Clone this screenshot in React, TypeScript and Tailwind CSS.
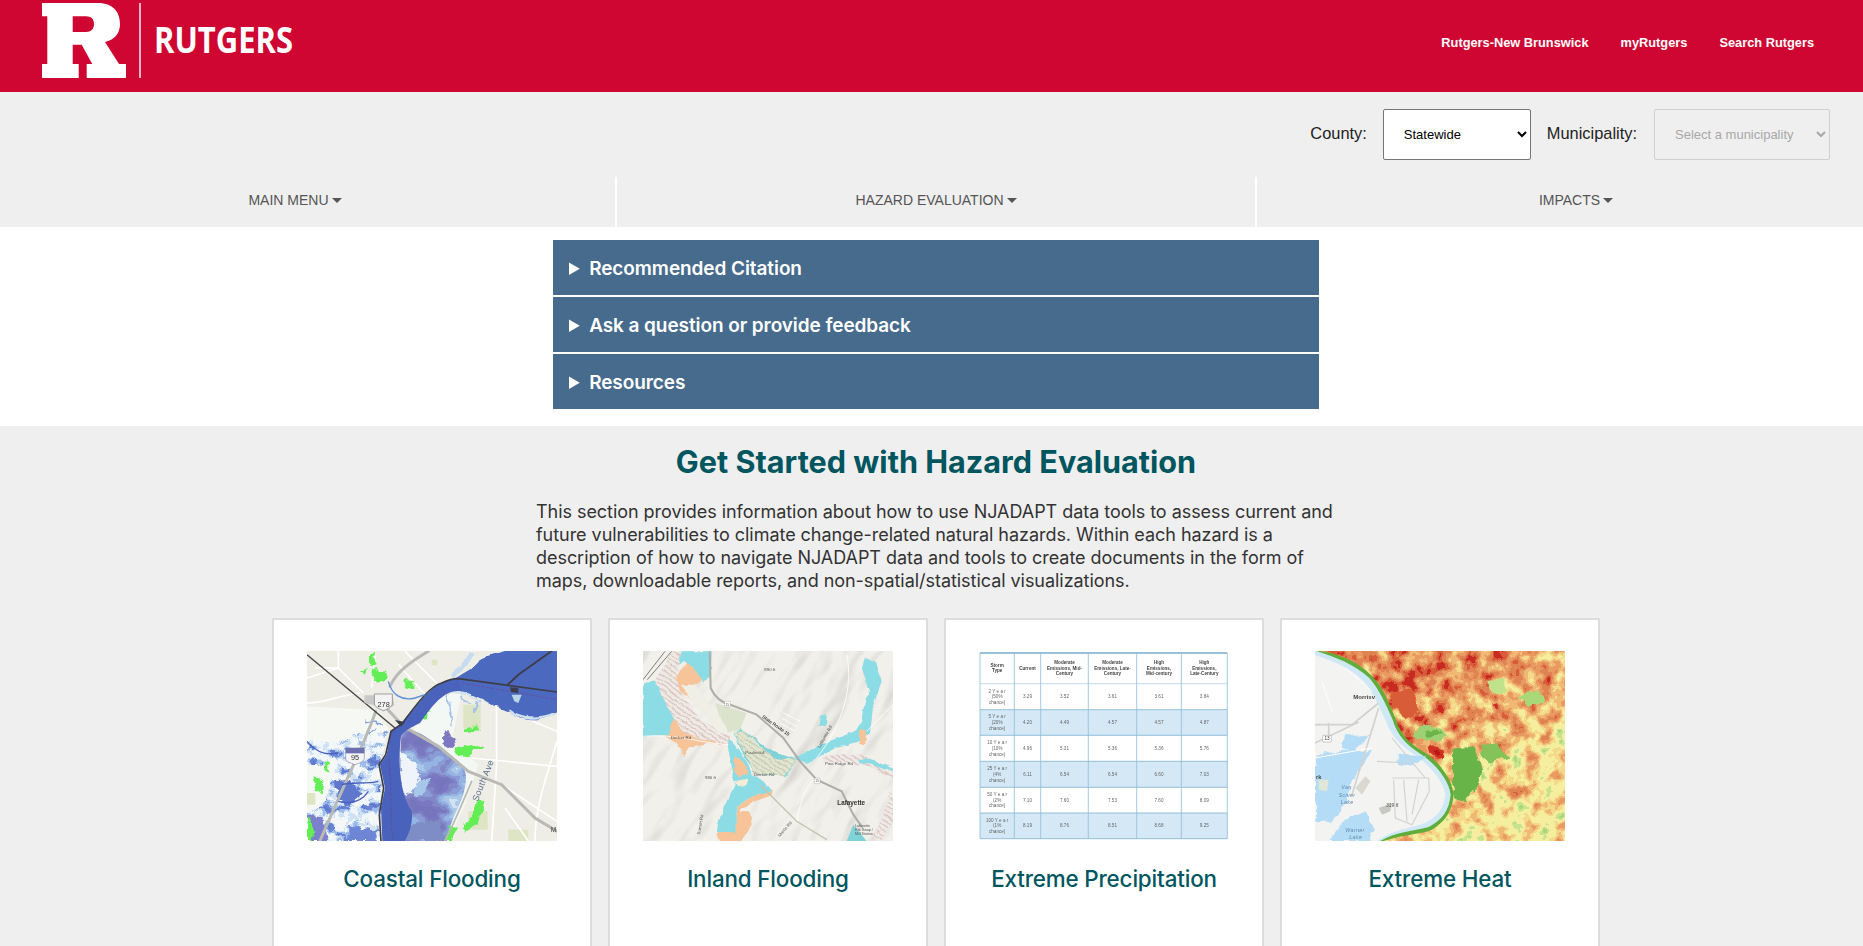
import React from "react";

const hex = (h: string) => [1, 3, 5].map((i) => parseInt(h.slice(i, i + 2), 16) / 255);
const tables = (p: string[]) => {
  const c = p.map(hex);
  return [0, 1, 2].map((k) => c.map((v) => v[k].toFixed(3)).join(" "));
};

function Palette({ colors }: { colors: string[] }) {
  const [r, g, b] = tables(colors);
  return (
    <feComponentTransfer>
      <feFuncR type="discrete" tableValues={r} />
      <feFuncG type="discrete" tableValues={g} />
      <feFuncB type="discrete" tableValues={b} />
      <feFuncA type="linear" slope="0" intercept="1" />
    </feComponentTransfer>
  );
}

const GRAY = "1 0 0 0 0 1 0 0 0 0 1 0 0 0 0 0 0 0 0 1";

function Jag({ id, freq, scale, seed }: { id: string; freq: string; scale: string; seed: string }) {
  return (
    <filter id={id} x="-10%" y="-10%" width="120%" height="120%" colorInterpolationFilters="sRGB">
      <feTurbulence type="fractalNoise" baseFrequency={freq} numOctaves="3" seed={seed} result="n" />
      <feDisplacementMap in="SourceGraphic" in2="n" scale={scale} xChannelSelector="R" yChannelSelector="G" />
    </filter>
  );
}

function Logo() {
  return (
    <div className="flex items-start pl-[42px] pt-[3px]">
      <svg viewBox="0 0 84 75" className="w-[84px] h-[75px] block">
        <path
          fillRule="evenodd"
          fill="#fff"
          d="M0 0H56C71 0 78 9 78 21C78 31 72 37 63 39L77 61H84V75H44.7V61H50.3L39.7 41.7H30.7V61H36.7V75H0V61H5.3V13.3H0ZM30.7 13.3V29H44C49 29 52 26 52 21C52 16 49 13.3 44 13.3Z"
        />
      </svg>
      <div className="w-[2px] h-[75px] bg-[#f3b6c4] ml-[13px]" />
      <svg viewBox="0 0 180 56" className="w-[180px] h-[56px] block ml-[13px] mt-[12px]">
        <text x="0" y="38" fill="#fff" fontFamily="'Open Sans', sans-serif" fontWeight="700" fontSize="36" textLength="139" lengthAdjust="spacingAndGlyphs">
          RUTGERS
        </text>
      </svg>
    </div>
  );
}

function Coastal() {
  return (
    <svg viewBox="6 9 750 570" className="w-[250px] h-[190px] block">
      <defs>
        <filter id="cb" x="-2%" y="-2%" width="104%" height="104%">
          <feGaussianBlur stdDeviation="1.6" />
        </filter>
        <Jag id="cj" freq="0.05" scale="22" seed="3" />
        <Jag id="cj2" freq="0.025" scale="16" seed="8" />
        <filter id="cf" x="0" y="0" width="1" height="1" colorInterpolationFilters="sRGB">
          <feTurbulence type="fractalNoise" baseFrequency="0.012 0.016" numOctaves="3" seed="7" />
          <feColorMatrix values={GRAY} />
          <Palette colors={["#7478c0", "#7478c0", "#7478c0", "#7474bc", "#7a78c0", "#8288c8", "#8a9cd6", "#96b4e2", "#aac8ea", "#d2e2f2", "#edf3f8", "#edf3f8"]} />
        </filter>
        <filter id="cl" x="0" y="0" width="1" height="1" colorInterpolationFilters="sRGB">
          <feTurbulence type="fractalNoise" baseFrequency="0.022 0.03" numOctaves="4" seed="21" />
          <feColorMatrix values={GRAY} />
          <Palette colors={["#5f78cc", "#5f78cc", "#5f78cc", "#6a86d4", "#9cbcea", "#d0e2f4", "#f0f6fa", "#f6f9f7", "#f6f9f7", "#f6f9f7", "#f6f9f7", "#f6f9f7"]} />
        </filter>
        <clipPath id="cr">
          <path d="M290 250C330 235 370 270 420 310C470 345 495 365 478 425C470 470 440 500 425 579H300C295 530 320 500 300 470C280 430 285 320 290 250Z" />
        </clipPath>
        <clipPath id="cll">
          <path d="M6 260C60 300 120 290 170 240C205 215 235 225 250 240C235 290 230 340 222 360C235 420 228 500 222 579H6V480C70 500 90 400 60 360L6 340Z" />
        </clipPath>
      </defs>
      <g filter="url(#cb)">
        <rect x="6" y="9" width="750" height="570" fill="#eeede6" />
        <path d="M6 175L205 185L250 240L225 360L225 579H6Z" fill="#f6f8f4" />
        <path d="M330 215C370 170 420 130 470 135L440 280L520 350L480 470L430 579H300Z" fill="#f4f8f5" />
        <g fill="#dde5c4">
          <rect x="475" y="170" width="52" height="72" />
          <rect x="490" y="490" width="58" height="55" />
          <rect x="610" y="545" width="60" height="34" />
          <rect x="6" y="435" width="25" height="35" />
          <rect x="380" y="35" width="17" height="17" />
        </g>
        <g fill="none" stroke="#fff" strokeWidth="5">
          <path d="M6 165C60 165 90 145 165 135M30 60L100 60L175 135M100 10L100 60M6 90L100 60" />
          <path d="M210 25L200 120M300 10L420 130M280 50L370 150" />
          <path d="M575 170L575 350L560 579M500 330L756 355M660 210L756 250M756 280C720 400 690 480 690 579M575 400L756 520M600 480L670 579" />
        </g>
        <g filter="url(#cj2)">
          <path d="M452 90C480 72 510 60 525 35C545 20 590 12 625 2H770V185C725 205 700 222 655 210C630 206 612 185 570 176C545 160 510 140 470 130C440 122 420 128 395 148C420 120 440 100 452 90Z" fill="#4c69bf" />
          <path d="M500 12L470 60L440 88" fill="none" stroke="#c7dcf0" strokeWidth="12" />
          <path d="M400 140C440 122 490 135 525 160M610 184C640 210 700 222 770 188" fill="none" stroke="#cfe2f2" strokeWidth="7" />
        </g>
        <g filter="url(#cj)" fill="none" strokeWidth="7" stroke="#a7c3ea">
          <path d="M430 140L440 235M520 160L510 190M470 150L490 170" />
          <path d="M180 220L230 225M170 290L250 250M120 300L215 240" stroke="#7fa3dc" strokeWidth="5" />
        </g>
        <path d="M620 140L650 140L640 165L628 160Z" fill="#b8d6e4" />
        <g filter="url(#cj)">
          <rect x="6" y="260" width="260" height="319" filter="url(#cl)" clipPath="url(#cll)" />
        </g>
        <rect x="285" y="235" width="215" height="344" filter="url(#cf)" clipPath="url(#cr)" />
        <g filter="url(#cj)">
          <path d="M285 300C310 330 340 350 345 390C330 420 320 440 300 445C285 400 282 350 285 300Z" fill="#eef4f9" />
          <path d="M340 395L380 390L350 450L325 440Z" fill="#a8c8ea" />
          <path d="M420 250L455 275L440 300L415 290Z" fill="#7d78c0" />
          <path d="M6 500L50 505L70 579H6Z" fill="#7c80cc" />
          <path d="M130 530L215 550L215 579H130Z" fill="#6d86d6" />
          <path d="M300 530L400 515L425 579H300Z" fill="#7f8dc6" />
          <path d="M90 400L130 395L170 440L130 475L100 450Z" fill="#5e78cc" />
        </g>
        <g fill="#64ee55" filter="url(#cj)">
          <path d="M205 62L240 68L245 95L215 105L200 85Z" />
          <path d="M195 20L210 12L208 50L195 50Z" />
          <path d="M295 95L325 100L325 125L300 120Z" />
          <path d="M445 300L495 288L540 298L505 312L480 330L455 320Z" />
          <path d="M470 245L515 238L510 222L525 250L480 255Z" />
          <path d="M520 450L538 460L525 515L480 555L470 540L505 500Z" />
          <path d="M432 530L460 540L440 579H418Z" />
          <path d="M22 385L55 400L50 440L32 425Z" />
          <path d="M6 510L28 530L20 579L6 579Z" />
          <path d="M350 210L375 182L362 215Z" />
          <path d="M60 345L75 340L70 375L55 365Z" />
          <path d="M165 70L190 60L180 80Z" />
        </g>
        <g fill="none" stroke="#b9b9b6" strokeWidth="9" strokeLinecap="round">
          <path d="M370 10C320 40 275 70 255 115" />
          <path d="M212 190C190 260 130 380 45 579" />
          <path d="M230 165L295 235L400 295L490 370L590 410L690 510L756 550" />
          <path d="M500 400C470 470 450 520 420 579" strokeWidth="5" />
        </g>
        <path d="M232 579L228 480L240 420L225 350L245 320L258 252L290 226C325 190 370 120 410 105C425 98 440 92 460 92L470 130C425 122 390 160 345 225C315 240 295 250 288 265C280 330 280 430 320 490C325 530 310 560 300 579Z" fill="#4a62bb" />
        <path d="M470 105L756 155M252 330C262 400 252 480 264 579" fill="none" stroke="#6f3f99" strokeWidth="2" strokeDasharray="10 5" />
        <path d="M6 20L270 240" stroke="#444" strokeWidth="4" />
        <path d="M228 579L223 500L236 420L222 350L242 320L258 250L290 228C320 190 370 115 410 105C425 98 440 92 460 92L756 132" fill="none" stroke="#3e3e4a" strokeWidth="5" />
        <path d="M740 9L640 80L608 110" fill="none" stroke="#3e3e4a" strokeWidth="6" />
        <path d="M615 118L640 120L640 135L618 132Z" fill="#3e3e4a" />
        <path d="M270 216L300 222L288 236Z" fill="#3e3e4a" />
        <g fill="none" stroke="#4a5fc0" strokeWidth="4">
          <path d="M6 280C40 320 70 320 100 315M110 410C140 400 180 410 220 400M100 460C140 470 170 460 190 430" />
          <path d="M250 100C260 140 290 160 330 150L360 140" stroke="#5b8fd8" />
        </g>
        <path d="M178 142H262L268 172L236 190L208 172L178 165Z" fill="#c9c9c9" />
        <path d="M208 138H262V165C262 178 248 182 236 188C222 182 208 178 208 165Z" fill="#f4f4f4" stroke="#777" strokeWidth="2" />
        <text x="236" y="178" fontSize="22" fill="#333" textAnchor="middle" fontFamily="'Liberation Sans', sans-serif">278</text>
        <path d="M122 300H178V330C178 340 165 345 150 350C135 345 122 340 122 330Z" fill="#f4f4f4" stroke="#8a8ab0" strokeWidth="2" />
        <path d="M122 300H178V316H122Z" fill="#6a70b0" />
        <text x="150" y="336" fontSize="22" fill="#333" textAnchor="middle" fontFamily="'Liberation Sans', sans-serif">95</text>
        <text x="0" y="0" fontSize="27" fill="#5b6f90" fontFamily="'Liberation Sans', sans-serif" transform="translate(518 462) rotate(-68)" letterSpacing="1">South Ave</text>
        <text x="737" y="552" fontSize="20" fill="#444" fontFamily="'Liberation Sans', sans-serif">M</text>
      </g>
    </svg>
  );
}

function Inland() {
  const cyan = "#8cdce6";
  const peach = "#f6c498";
  return (
    <svg viewBox="9 9 750 570" className="w-[250px] h-[190px] block">
      <defs>
        <filter id="ib" x="-2%" y="-2%" width="104%" height="104%">
          <feGaussianBlur stdDeviation="2.2" />
        </filter>
        <Jag id="ij" freq="0.03" scale="14" seed="5" />
        <filter id="ih" x="0" y="0" width="1" height="1" colorInterpolationFilters="sRGB">
          <feTurbulence type="fractalNoise" baseFrequency="0.009 0.003" numOctaves="3" seed="12" result="n" />
          <feDiffuseLighting in="n" surfaceScale="22" diffuseConstant="1.18" lightingColor="#fff">
            <feDistantLight azimuth="315" elevation="58" />
          </feDiffuseLighting>
        </filter>
        <pattern id="ihatch" width="13" height="13" patternUnits="userSpaceOnUse" patternTransform="rotate(35)">
          <rect width="13" height="13" fill="#eeeae4" />
          <rect width="13" height="3.5" fill="#dabfbf" />
        </pattern>
        <pattern id="ihg" width="13" height="13" patternUnits="userSpaceOnUse" patternTransform="rotate(35)">
          <rect width="13" height="13" fill="#dfe5cf" />
          <rect width="13" height="3" fill="#c8c4ae" />
        </pattern>
      </defs>
      <g filter="url(#ib)">
        <rect x="9" y="9" width="750" height="570" fill="#f1f0ea" />
        <rect x="-200" y="-250" width="1170" height="1100" transform="rotate(35 384 294)" filter="url(#ih)" className="mix-blend-multiply" opacity="0.32" />
        <path d="M225 165L320 195L300 245L255 255Z" fill="#dbe3cd" />
        <g filter="url(#ij)">
          <path d="M9 262L60 205L100 205L130 235L270 262L268 290L200 285L145 300L130 325L115 290L70 262Z" fill={peach} />
          <path d="M9 110L45 95L100 215L85 262L9 265Z" fill={cyan} />
          <path d="M45 100L95 10L125 10L115 60L120 130L180 215L270 260L262 290L140 262L100 215Z" fill="url(#ihatch)" />
          <path d="M108 95L140 40L190 90L165 110L180 170L120 130Z" fill={peach} />
          <path d="M115 55L125 10H215L213 90L190 100L160 60L130 40Z" fill={cyan} />
          <path d="M120 110L165 110L235 200L265 255L240 255L180 190Z" fill="#f0efe6" />
          <path d="M395 425L400 440L345 460C320 470 305 480 300 490L330 490L335 530L300 585L240 585L228 555L288 555L290 490C300 465 315 450 345 445Z" fill={peach} />
          <path d="M262 270C290 285 310 320 340 385L370 400L395 430L345 445C315 450 300 465 290 490L290 555L230 555C235 500 265 460 283 415C285 370 262 320 262 270Z" fill={cyan} />
          <path d="M282 325C305 330 320 360 325 380L300 388L282 365Z" fill={peach} />
          <path d="M282 400L325 392L320 410L292 415Z" fill="#f7ecd8" />
          <path d="M300 240C340 260 370 310 470 335L440 385L350 380L320 340L280 255Z" fill="#7fd3d8" />
          <path d="M280 252L310 245L400 330L470 335L435 385L345 378L315 320Z" fill="url(#ihg)" />
          <path d="M460 330C500 320 530 285 590 272L640 250C660 240 665 220 668 190L690 130L665 60L675 28L705 45L725 100L700 170L690 255L660 280L590 300L500 345Z" fill={cyan} />
          <path d="M545 330L600 315L660 320L710 340L765 380L765 400L700 360L620 345L560 345Z" fill="url(#ihatch)" />
          <path d="M660 335L700 335L765 365V375L700 352L660 345Z" fill={cyan} />
          <path d="M660 245L680 250L675 295L660 290Z" fill={peach} />
          <path d="M755 420L765 510L720 585L700 560L740 480Z" fill="url(#ihatch)" />
          <path d="M540 205L558 195L555 230L535 235Z" fill={cyan} />
        </g>
        <g fill="none" stroke="#fff" strokeWidth="2.5">
          <path d="M9 265C100 255 180 285 265 290M470 520C480 470 490 430 520 395M620 20C640 110 610 230 530 330M430 195L480 220M425 210L470 235M420 225L465 250M560 345L640 345M680 250L759 170" />
        </g>
        <path d="M360 410L470 520L560 575" fill="none" stroke="#c4c4b4" strokeWidth="4" />
        <path d="M209 10L212 120C225 150 245 165 275 172L350 200L430 270L480 340L530 395L605 430L640 500L665 535" fill="none" stroke="#aeaea6" strokeWidth="6" />
        <path d="M9 95L75 10M22 95L95 10" stroke="#666" strokeWidth="2.5" />
        <path d="M640 530L680 579H620Z" fill="#7fd3d8" />
        <rect x="254" y="160" width="17" height="17" rx="2" fill="#fff" stroke="#888" />
        <rect x="523" y="390" width="17" height="17" rx="2" fill="#fff" stroke="#888" />
        <g fontFamily="'Liberation Sans', sans-serif" fontSize="13" fill="#555">
          <text x="262" y="173" textAnchor="middle" fontSize="10">15</text>
          <text x="531" y="403" textAnchor="middle" fontSize="10">15</text>
          <text x="373" y="68">890 ft</text>
          <text x="195" y="392">980 ft</text>
          <text x="92" y="272">Decker Rd</text>
          <text x="316" y="319">Paulinskill</text>
          <text x="342" y="385">Decker Rd</text>
          <text x="555" y="350">Pine Ridge Rd</text>
          <text x="592" y="472" fontSize="19" fontWeight="700" fill="#333">Lafayette</text>
          <text x="645" y="538" fontSize="11">Lafayette</text>
          <text x="645" y="550" fontSize="11">Rte Swap /</text>
          <text x="645" y="562" fontSize="11">Mill Station</text>
          <text x="0" y="0" fontWeight="700" fill="#444" fontSize="14" transform="translate(365 208) rotate(35)">State Route 15</text>
          <text x="0" y="0" transform="translate(540 300) rotate(-60)">Lafayette Rd</text>
          <text x="0" y="0" transform="translate(180 560) rotate(-80)">Sunset Rd</text>
          <text x="0" y="0" transform="translate(420 568) rotate(-50)">Morris Rd</text>
        </g>
      </g>
    </svg>
  );
}

function Precip() {
  const xs = [1, 35.3, 61.7, 109.3, 157.7, 202.3, 248.3];
  const ys = [2, 32.7, 58.7, 84.3, 110.3, 136.3, 162, 187.7];
  const head = [
    ["Storm", "Type"],
    ["Current"],
    ["Moderate", "Emissions, Mid-", "Century"],
    ["Moderate", "Emissions, Late-", "Century"],
    ["High", "Emissions,", "Mid-century"],
    ["High", "Emissions,", "Late-Century"],
  ];
  const rows = [
    ["2 Y e a r", "(50%", "3.29", "3.52", "3.61", "3.61", "3.84"],
    ["5 Y e a r", "(20%", "4.20", "4.49", "4.57", "4.57", "4.87"],
    ["10 Y e a r", "(10%", "4.96", "5.31", "5.36", "5.36", "5.76"],
    ["25 Y e a r", "(4%", "6.11", "6.54", "6.54", "6.60", "7.03"],
    ["50 Y e a r", "(2%", "7.10", "7.60", "7.53", "7.60", "8.09"],
    ["100 Y e a r", "(1%", "8.19", "8.76", "8.51", "8.68", "9.25"],
  ];
  const mid = (i: number) => (xs[i] + xs[i + 1]) / 2;
  return (
    <svg viewBox="0 0 250 190" className="w-[250px] h-[190px] block">
      <defs>
        <filter id="pb" x="-2%" y="-2%" width="104%" height="104%">
          <feGaussianBlur stdDeviation="0.45" />
        </filter>
      </defs>
      <rect width="250" height="190" fill="#fff" />
      <g filter="url(#pb)" fontFamily="'Liberation Sans', sans-serif" textAnchor="middle">
        {rows.map((r, i) =>
          i % 2 === 1 ? <rect key={i} x={xs[0]} y={ys[i + 1]} width={xs[6] - xs[0]} height={ys[i + 2] - ys[i + 1]} fill="#d4e8f6" /> : null,
        )}
        {ys.map((y, i) => (
          <line key={i} x1={xs[0]} x2={xs[6]} y1={y} y2={y} stroke={i === 0 ? "#3584b5" : i === 1 ? "#a9cfe6" : "#7db2d3"} strokeWidth={i === 0 ? 1 : 0.8} />
        ))}
        {xs.map((x, i) => (
          <line key={i} x1={x} x2={x} y1={ys[0]} y2={ys[7]} stroke="#8dbcd9" strokeWidth="0.8" />
        ))}
        {head.map((h, i) =>
          h.map((t, j) => (
            <text key={`${i}-${j}`} x={mid(i)} y={18.5 + (j - (h.length - 1) / 2) * 5.7} fontSize="4.6" fill="#444" fontWeight="700">
              {t}
            </text>
          )),
        )}
        {rows.map((r, i) => {
          const c = (ys[i + 1] + ys[i + 2]) / 2;
          return (
            <g key={i} fontSize="4.6" fill="#666">
              <text x={mid(0)} y={c - 4.2}>{r[0]}</text>
              <text x={mid(0)} y={c + 1.6}>{r[1]}</text>
              <text x={mid(0)} y={c + 7.2}>chance)</text>
              {r.slice(2).map((v, j) => (
                <text key={j} x={mid(j + 1)} y={c + 1.6}>{v}</text>
              ))}
            </g>
          );
        })}
      </g>
    </svg>
  );
}

function Heat() {
  return (
    <svg viewBox="9 9 750 570" className="w-[250px] h-[190px] block">
      <defs>
        <linearGradient id="hg" x1="0.15" y1="0.05" x2="0.95" y2="1">
          <stop offset="0" stopColor="#a4a4a4" />
          <stop offset="0.35" stopColor="#949494" />
          <stop offset="0.65" stopColor="#686868" />
          <stop offset="1" stopColor="#505050" />
        </linearGradient>
        <filter id="hh" x="0" y="0" width="1" height="1" colorInterpolationFilters="sRGB">
          <feTurbulence type="fractalNoise" baseFrequency="0.022" numOctaves="3" seed="9" result="n" />
          <feColorMatrix in="n" values={GRAY} result="g" />
          <feComposite in="SourceGraphic" in2="g" operator="arithmetic" k1="0" k2="1" k3="0.95" k4="-0.33" />
          <Palette colors={["#4f9f38", "#8cc85c", "#a9d878", "#c9e48e", "#f5ef9e", "#f5ef9e", "#f4d98a", "#f0b874", "#e99a62", "#e08352", "#d95c38", "#c92d22"]} />
        </filter>
        <filter id="hb" x="-2%" y="-2%" width="104%" height="104%">
          <feGaussianBlur stdDeviation="1.8" />
        </filter>
        <Jag id="hj" freq="0.035" scale="22" seed="6" />
      </defs>
      <g filter="url(#hb)">
        <rect x="9" y="9" width="750" height="570" fill="url(#hg)" filter="url(#hh)" />
        <g filter="url(#hj)">
          <path d="M320 240C345 220 380 235 405 262L385 280L340 275L305 262Z" fill="#9ed173" />
          <path d="M340 248L375 242L392 262L345 266Z" fill="#6cb44a" />
          <path d="M420 305L490 298L510 370L500 410L460 460L430 450L420 400Z" fill="#68b44a" />
          <path d="M505 290L550 288L590 325L540 345L510 325Z" fill="#84c25a" />
          <path d="M615 150L680 125L700 160L650 175Z" fill="#a9d878" />
          <path d="M520 100L570 90L590 130L540 135Z" fill="#bfe28a" />
          <path d="M350 300L370 295L390 305L398 330L375 332L355 318Z" fill="#d03020" />
          <path d="M360 305L375 302L388 320L375 325Z" fill="#b81416" />
          <path d="M240 130L300 120L320 190L280 210L245 170Z" fill="#d95c38" />
          <path d="M540 170L560 165L555 185Z" fill="#c92d22" />
        </g>
        <path d="M9 9H24C80 18 140 40 180 85C215 120 230 165 250 210C265 260 290 285 340 315C385 345 420 395 425 440C420 490 400 520 360 545C320 560 270 560 215 579H9Z" fill="#5fae3a" />
        <path d="M9 9H14C72 28 125 48 172 90C202 125 220 165 242 215C257 265 284 290 329 320C374 350 412 400 416 440C411 490 390 515 350 537C300 550 250 552 205 579H9Z" fill="#cfe8f6" />
        <path d="M9 22C70 40 120 65 155 100C185 135 200 175 222 220C240 270 270 295 315 325C355 355 395 400 400 440C395 485 375 505 340 525C300 540 240 545 195 579H9Z" fill="#f3f3f1" />
        <g filter="url(#hj)" fill="#b5dcf6">
          <path d="M95 262L160 258L175 265L125 310L90 300Z" />
          <path d="M9 320L120 305L180 310L120 400L100 470L60 520L9 515Z" />
          <path d="M100 510L160 490L185 540L175 579H50Z" />
          <path d="M260 320L340 325L305 355L255 345Z" />
        </g>
        <path d="M20 395H50L45 430L20 425Z" fill="#dfe7d6" />
        <g fill="none" stroke="#d2d2d0" strokeWidth="5">
          <path d="M9 230L120 230L200 165M9 285L140 222M120 230L195 170" />
          <path d="M50 225L50 280M200 180L120 440" />
          <path d="M240 390H350L352 430L300 530L250 510L245 395M275 395L285 520M320 395L300 500" strokeWidth="3.5" />
          <path d="M195 340L290 345M240 270L340 390" strokeWidth="3.5" />
        </g>
        <g fill="none" stroke="#fff" strokeWidth="3">
          <path d="M9 330L180 300M30 100L60 190M100 60L180 130" />
        </g>
        <path d="M200 480L240 465L235 490L210 500Z" fill="#c8c8c4" />
        <path d="M130 420L160 385L175 400L150 440Z" fill="#d9d9d2" />
        <rect x="32" y="262" width="26" height="20" rx="2" fill="#fff" stroke="#666" />
        <g fontFamily="'Liberation Sans', sans-serif">
          <text x="45" y="277" textAnchor="middle" fontSize="14" fill="#333">13</text>
          <text x="124" y="152" fontSize="18" fontWeight="700" fill="#444">Morrisv</text>
          <text x="12" y="392" fontSize="17" fontWeight="700" fill="#444">rk</text>
          <g fontSize="16" fontStyle="italic" fill="#5f8cb0" letterSpacing="1">
            <text x="88" y="424">Van</text>
            <text x="80" y="446">Sciver</text>
            <text x="86" y="469">Lake</text>
            <text x="100" y="552">Warner</text>
            <text x="112" y="574">Lake</text>
          </g>
          <text x="222" y="478" fontSize="15" fontStyle="italic" fill="#555">319 ft</text>
        </g>
      </g>
    </svg>
  );
}

const cards = [
  { title: "Coastal Flooding", art: <Coastal /> },
  { title: "Inland Flooding", art: <Inland /> },
  { title: "Extreme Precipitation", art: <Precip /> },
  { title: "Extreme Heat", art: <Heat /> },
];

function Caret() {
  return <span className="inline-block ml-[3px] align-middle w-0 h-0 border-x-[5px] border-x-transparent border-t-[5px] border-t-[#555]" />;
}

export default function App() {
  return (
    <div className="w-full h-[946px] overflow-hidden bg-[#efefef] font-['Liberation_Sans',sans-serif]">
      <div className="w-[1872px]">
        <header className="h-[92px] bg-[#cf0632] flex justify-between">
          <Logo />
          <nav className="flex items-start gap-[32px] pt-[35px] pr-[58px] text-[12.8px] leading-[16px] font-bold text-white">
            <a>Rutgers-New Brunswick</a>
            <a>myRutgers</a>
            <a>Search Rutgers</a>
          </nav>
        </header>

        <div className="h-[85px] flex justify-end items-start pt-[17px] pr-[42px] text-[16.4px] text-[#222]">
          <label className="h-[49px] flex items-center">County:</label>
          <select className="ml-[16px] w-[148px] h-[51px] pl-[16px] text-[13px] bg-white border border-[#767676] rounded-[2px] text-black">
            <option>Statewide</option>
          </select>
          <label className="ml-[16px] h-[49px] flex items-center">Municipality:</label>
          <select disabled className="ml-[17px] w-[176px] h-[51px] pl-[16px] text-[13px] bg-[#efefef] border border-[#d0d0d0] rounded-[2px] text-[#a8a8a8]">
            <option>Select a municipality</option>
          </select>
        </div>

        <div className="-ml-[25px] w-[1920px] grid grid-cols-3 h-[50px] text-[14px] text-[#555]">
          <div className="flex items-center justify-center pb-[4px]"><span>MAIN MENU<Caret /></span></div>
          <div className="flex items-center justify-center pb-[4px] border-l-2 border-white"><span>HAZARD EVALUATION<Caret /></span></div>
          <div className="flex items-center justify-center pb-[4px] border-l-2 border-white"><span>IMPACTS<Caret /></span></div>
        </div>

        <section className="h-[199px] bg-white pt-[13px] flex flex-col items-center gap-[2px] font-['Inter',sans-serif]">
          {["Recommended Citation", "Ask a question or provide feedback", "Resources"].map((t) => (
            <details key={t} className="w-[766px] h-[55px] bg-[#466b8c] text-white">
              <summary className="h-[55px] pl-[16px] leading-[57px] text-[19px] font-semibold tracking-[-0.08px]">{t}</summary>
            </details>
          ))}
        </section>

        <section className="font-['Inter',sans-serif]">
          <h2 className="pt-[17px] text-center text-[30.6px] leading-[38px] font-bold text-[#00565f]">Get Started with Hazard Evaluation</h2>
          <p className="w-[800px] mx-auto mt-[19px] text-[18px] leading-[23px] text-[#333] tracking-[-0.045px]">
            This section provides information about how to use NJADAPT data tools to assess current and future vulnerabilities to climate change-related natural hazards. Within each hazard is a description of how to navigate NJADAPT data and tools to create documents in the form of maps, downloadable reports, and non-spatial/statistical visualizations.
          </p>
          <div className="mt-[26px] flex justify-center gap-[16px]">
            {cards.map((c) => (
              <div key={c.title} className="w-[320px] h-[400px] bg-white border-2 border-[#dcdcdc] flex flex-col items-center pt-[31px]">
                {c.art}
                <h3 className="mt-[22px] text-[22.4px] leading-[32px] font-medium tracking-[-0.15px] text-[#00565f]">{c.title}</h3>
              </div>
            ))}
          </div>
        </section>
      </div>
    </div>
  );
}
